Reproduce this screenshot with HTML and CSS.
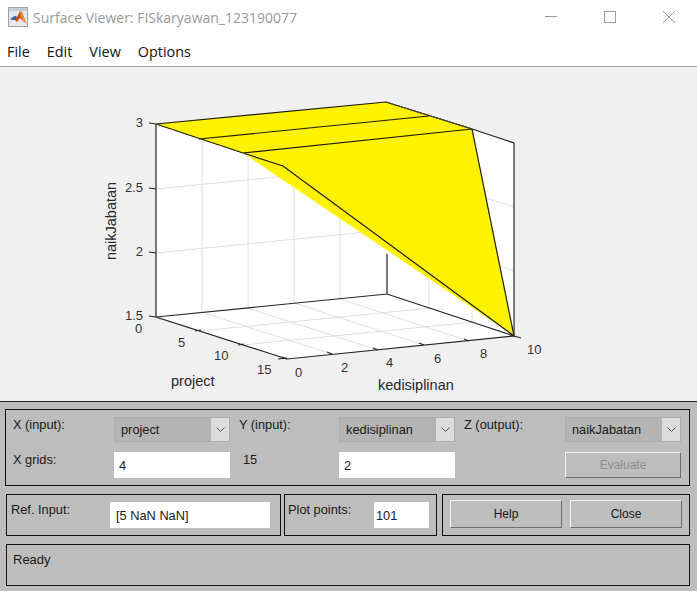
FILE: index.html
```html
<!DOCTYPE html>
<html lang="en">
<head>
  <meta charset="UTF-8" />
  <title>Surface Viewer</title>
  <link rel="stylesheet" href="styles.css">
</head>
<body>

  <div class="titlebar">
    <svg class="app-icon" width="20" height="20" viewBox="0 0 20 20">
      <rect x="0.5" y="0.5" width="19" height="19" fill="#e4e8ec" stroke="#9aa2ac" />
      <rect x="1" y="1" width="18" height="3" fill="#c4ccd6" />
      <path d="M2 12 L7 9 L9 10 L12 4 L14 5 L18 16 L15 14 L12 11 L9 15 L7 13 Z" fill="#c9501a" />
      <path d="M2 12 L7 9 L9 10 L7 13 L5 13 Z" fill="#2b6ca6" />
      <path d="M12 4 L14 5 L18 16 L15 14 L12.5 8 Z" fill="#f0902a" />
    </svg>
    <span class="title">Surface Viewer: FISkaryawan_123190077</span>
    <div class="win-btns">
      <svg width="14" height="14" viewBox="0 0 14 14"><path d="M1 6.5 H13" stroke="#9a9a9a" fill="none" /></svg>
      <svg width="14" height="14" viewBox="0 0 14 14"><rect x="1.5" y="1.5" width="11" height="11" stroke="#9a9a9a" fill="none" /></svg>
      <svg width="14" height="14" viewBox="0 0 14 14"><path d="M1 1 L13 13 M13 1 L1 13" stroke="#9a9a9a" fill="none" /></svg>
    </div>
  </div>

  <div class="menubar">
    <span>File</span>
    <span>Edit</span>
    <span>View</span>
    <span>Options</span>
  </div>

  <div class="plot">
    <svg width="697" height="334" viewBox="0 67 697 334">
      <!-- walls and floor -->
      <polygon class="wall" points="156,124 386,102 514,143 514,336 287,359 156,317" />

      <!-- grid -->
      <path class="grid" d="M202,120 V312 M248,115 V308 M294,111 V303 M340,106 V299 M429,116 V308 M472,129 V322" />
      <path class="grid" d="M156,189 L387,166 L514,207 M156,253 L387,230 L514,271" />
      <path class="grid" d="M201,312 L332,354 M247,308 L378,350 M294,303 L424,345 M340,299 L469,341
                            M200,331 L431,308 M243,345 L474,322" />

      <!-- surface -->
      <polygon class="surf" points="156,124 386,102 472,129 514,336 243,153" />
      <path class="mesh" d="M156,124 L386,102 L472,129 L514,336 L283,166 L243,153 L156,124 M199,139 L429,116 M243,153 L472,129" />

      <!-- box edges -->
      <path class="edge" d="M156,124 V317 L287,359 L514,336 V143 L472,129 M156,317 L387,294 L514,336 M387,294 V254" />
      <path class="edge-soft" d="M386,102 L472,129" />

      <!-- ticks -->
      <path class="edge" d="M149,123 L156,124 M149,188 L156,189 M149,252 L156,253 M149,316 L156,317
                            M195,331 L201,330 M238,345 L244,344 M278,359 L287,358
                            M287,359 L282,357 M332,354 L327,352 M378,350 L373,348 M424,345 L419,343 M469,341 L464,339 M514,336 L521,338" />

      <!-- tick labels -->
      <text class="tick" x="143" y="127" text-anchor="end">3</text>
      <text class="tick" x="143" y="192" text-anchor="end">2.5</text>
      <text class="tick" x="143" y="256" text-anchor="end">2</text>
      <text class="tick" x="143" y="320" text-anchor="end">1.5</text>
      <text class="tick" x="135" y="333">0</text>
      <text class="tick" x="178" y="347">5</text>
      <text class="tick" x="214" y="360">10</text>
      <text class="tick" x="257" y="374">15</text>
      <text class="tick" x="295" y="377">0</text>
      <text class="tick" x="341" y="372">2</text>
      <text class="tick" x="386" y="367">4</text>
      <text class="tick" x="434" y="363">6</text>
      <text class="tick" x="480" y="358">8</text>
      <text class="tick" x="527" y="354">10</text>

      <!-- axis labels -->
      <text class="axis" x="171" y="386">project</text>
      <text class="axis" x="378" y="390">kedisiplinan</text>
      <text class="axis" transform="translate(116,221) rotate(-90)" text-anchor="middle">naikJabatan</text>
    </svg>
  </div>

  <div class="panel">
    <div class="box box-vars">
      <label>X (input):</label>
      <div class="select"><span>project</span><i class="arrow"><svg width="9" height="5" viewBox="0 0 9 5"><path d="M0.5 0.5 L4.5 4.5 L8.5 0.5" /></svg></i></div>
      <label class="gap">Y (input):</label>
      <div class="select"><span>kedisiplinan</span><i class="arrow"><svg width="9" height="5" viewBox="0 0 9 5"><path d="M0.5 0.5 L4.5 4.5 L8.5 0.5" /></svg></i></div>
      <label class="gap">Z (output):</label>
      <div class="select"><span>naikJabatan</span><i class="arrow"><svg width="9" height="5" viewBox="0 0 9 5"><path d="M0.5 0.5 L4.5 4.5 L8.5 0.5" /></svg></i></div>

      <label>X grids:</label>
      <div class="field">4</div>
      <label class="gap-wide">15</label>
      <div class="field">2</div>
      <span></span>
      <button class="btn" disabled>Evaluate</button>
    </div>

    <div class="row">
      <div class="box box-ref">
        <label>Ref. Input:</label>
        <div class="field">[5 NaN NaN]</div>
      </div>
      <div class="box box-points">
        <label>Plot points:</label>
        <div class="field">101</div>
      </div>
      <div class="box box-btns">
        <button class="btn">Help</button>
        <button class="btn">Close</button>
      </div>
    </div>

    <div class="box box-status">Ready</div>
  </div>

</body>
</html>
```

FILE: styles.css
```css
* { box-sizing: border-box; }
body { margin: 0; width: 697px; height: 591px; overflow: hidden; background: #fff; font-family: "Liberation Sans", Arial, sans-serif; }

.titlebar { height: 34px; display: flex; align-items: center; padding-left: 8px; background: #fff; }
.app-icon { margin-right: 5px; }
.title { font: 14px "Open Sans", sans-serif; color: #999; }
.win-btns { margin-left: auto; display: flex; gap: 45px; padding-right: 21px; }

.menubar { height: 33px; display: flex; gap: 17px; padding: 3px 0 0 7px; align-items: center; background: #fff; border-bottom: 1px solid #a6a6a6; font: 14.4px "Open Sans", sans-serif; color: #111; }

.plot { height: 334px; background: #f0f0f0; }
.plot svg { display: block; }
.wall { fill: #fff; }
.grid { fill: none; stroke: #dedede; stroke-width: 1; }
.surf { fill: #fff200; }
.mesh { fill: none; stroke: #1c1c00; stroke-width: 1.2; }
.edge { fill: none; stroke: #262626; stroke-width: 1.2; }
.edge-soft { fill: none; stroke: #444; stroke-width: 1; }
.tick { font: 13px "Liberation Sans", sans-serif; fill: #333; }
.axis { font: 14.5px "Liberation Sans", sans-serif; fill: #262626; }

.panel { height: 190px; background: #bdbdbd; border-top: 1px solid #222; padding: 7px 7px 0 5px; display: flex; flex-direction: column; gap: 8px; font-size: 12.8px; color: #1a1a1a; }
.box { border: 1px solid #111; }
label { display: block; }

.box-vars { height: 77px; display: grid; grid-template-columns: 108px 116px 109px 116px 110px 116px; grid-template-rows: 25px 26px; row-gap: 10px; padding-top: 7px; }
.box-vars label { padding: 0 0 0 7px; }
.box-vars label.gap { padding-left: 9px; }
.box-vars label.gap-wide { padding: 0 0 0 13px; }

.select { display: flex; align-items: center; justify-content: space-between; background: #b4b4b4; border: 1px solid #adadad; padding: 0 0 0 6px; font-size: 12.8px; }
.select span { padding-bottom: 1px; }
.arrow { width: 18px; height: 100%; background: #dcdcdc; display: flex; align-items: center; justify-content: center; }
.arrow path { fill: none; stroke: #555; }

.field { background: #fff; padding: 6px 0 0 5px; font-size: 12.8px; }
.box-ref .field { padding-left: 6px; }
.box-points .field { padding-left: 2px; }

.btn { font: 12px "Liberation Sans", sans-serif; color: #1a1a1a; background: #bdbdbd; border: 1px solid; border-color: #f2f2f2 #6e6e6e #6e6e6e #f2f2f2; padding: 0; }
.btn:disabled { color: #8d8d8d; }

.row { display: flex; gap: 3px; margin-left: 1px; height: 42px; }
.box-ref { width: 275px; display: flex; padding: 7px 0 0 4px; }
.box-ref label { width: 99px; }
.box-ref .field { width: 160px; height: 26px; }
.box-points { width: 153px; display: flex; padding: 7px 0 0 3px; }
.box-points label { width: 86px; }
.box-points .field { width: 55px; height: 26px; }
.box-btns { width: 248px; margin-left: 2px; display: flex; gap: 8px; padding: 5px 0 0 7px; }
.box-btns .btn { width: 112px; height: 28px; }

.box-status { height: 42px; margin-left: 1px; padding: 7px 6px; font-size: 13px; }
```
